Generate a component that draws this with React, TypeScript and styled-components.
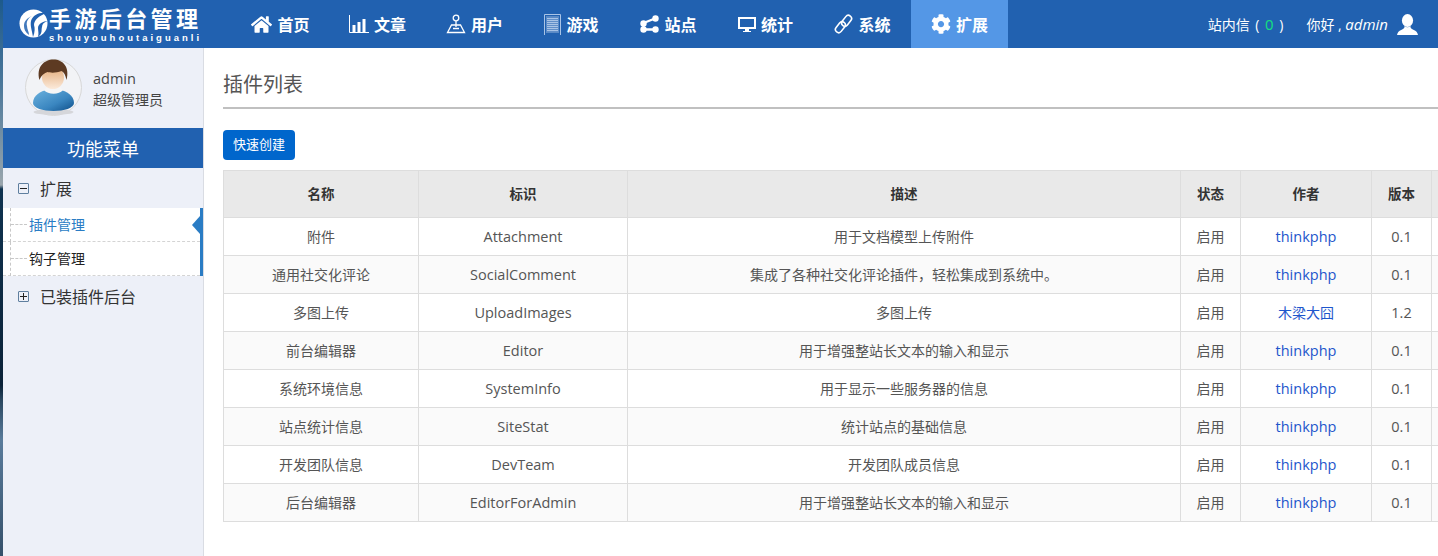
import React from "react";
import styled, { createGlobalStyle } from "styled-components";
import { FaHome, FaCog } from "react-icons/fa";

const Global = createGlobalStyle`
  html, body { margin: 0; padding: 0; background: #fff; overflow: hidden; }
  body { font-family: "Open Sans", "Noto Sans CJK SC", sans-serif; color: #555; }
  * { box-sizing: border-box; }
`;

const Page = styled.div`
  width: 1438px; height: 556px; overflow: hidden; display: flex; flex-direction: column;
  padding-left: 3px;
  background: linear-gradient(180deg, #1d5a8c 0, #4f7a9c 90px, #9aa6ad 185px, #0f3350 189px, #0b2238 385px, #2a4760 400px, #5a7c9c 440px, #35506a 556px);
`;
const Top = styled.header`
  height: 48px; background: #2161b0; display: flex; align-items: stretch; color: #fff; flex: none;
`;
const Logo = styled.div`
  width: 229px; padding: 9px 0 0 16px; display: flex; gap: 1px; flex: none;
`;
const LogoText = styled.div`display: flex; flex-direction: column; margin-top: -5px;`;
const LogoCn = styled.span`
  font: 700 22px/26px "Noto Sans CJK SC", sans-serif; letter-spacing: 3.4px; white-space: nowrap;
`;
const LogoEn = styled.span`
  font: 700 9.5px/10px "Liberation Sans", sans-serif; letter-spacing: 3px; margin-top: 3px; white-space: nowrap;
`;
const Nav = styled.nav`display: flex; align-items: stretch; flex: none;`;
const NavItem = styled.div<{ $active?: boolean }>`
  width: 97px; display: flex; align-items: center; justify-content: center; gap: 5px;
  font: 700 16px "Noto Sans CJK SC", sans-serif; background: ${(p) => (p.$active ? "#5497e6" : "transparent")};
`;
const Right = styled.div`
  margin-left: auto; display: flex; align-items: center; font: 14px "Open Sans", "Noto Sans CJK SC", sans-serif; padding-right: 20px;
`;
const Msg = styled.span`margin-right: 23px; white-space: pre; word-spacing: 2px;`;
const Green = styled.span`color: #13e07f; font-size: 15px;`;
const Greeting = styled.span`white-space: pre; margin-right: 9px;`;
const Em = styled.em`font-style: italic; font-size: 15px;`;

const Body = styled.div`flex: 1; display: flex; min-height: 0;`;
const Side = styled.aside`
  width: 201px; background: #edf0f8; border-right: 1px solid #d9dce3; flex: none; display: flex; flex-direction: column;
`;
const Profile = styled.div`height: 80px; display: flex; align-items: center; padding: 0 0 0 22px; gap: 10px; flex: none;`;
const ProfileText = styled.div`font-size: 14px; line-height: 21px; color: #444; font-family: "Noto Sans CJK SC", sans-serif; padding-top: 1px;`;
const ProfileName = styled.div`font-family: "Open Sans", sans-serif; font-size: 14.5px;`;
const MenuHead = styled.div`
  height: 40px; background: #2161b0; color: #fff; display: flex; align-items: center; justify-content: center;
  font: 18px "Noto Sans CJK SC", sans-serif; flex: none;
`;
const Group = styled.div`
  height: 40px; display: flex; align-items: center; padding-left: 15px; gap: 11px; color: #333; flex: none;
  font: 16px "Noto Sans CJK SC", sans-serif;
`;
const Toggle = styled.span<{ $plus?: boolean }>`
  width: 11px; height: 11px; border: 1px solid #5f7f9f; border-radius: 1px; position: relative; flex: none;
  &::before { content: ""; position: absolute; left: 1px; right: 1px; top: 4px; height: 1px; background: #222; }
  &::after { content: ""; display: ${(p) => (p.$plus ? "block" : "none")}; position: absolute; top: 1px; bottom: 1px; left: 4px; width: 1px; background: #222; }
`;
const Sub = styled.div`border-right: 3px solid #2a7cc4; background: #fff; flex: none;`;
const SubItem = styled.div<{ $active?: boolean }>`
  height: 34px; display: flex; align-items: center; position: relative; padding: 0 0 2px 26px;
  font: 14px "Noto Sans CJK SC", sans-serif;
  color: ${(p) => (p.$active ? "#2a7cc4" : "#222")};
  border-bottom: 1px dashed #d4d4d4;
  &::before { content: ""; position: absolute; left: 7px; top: 0; bottom: -1px; border-left: 1px dashed #c8c8c8; }
  &::after { content: ""; position: absolute; left: 8px; width: 16px; top: 16px; border-top: 1px dashed #c8c8c8; }
`;
const Arrow = styled.span`
  position: absolute; right: 0; top: 8px; border: 9px solid transparent; border-left: 0; border-right: 8px solid #2a7cc4;
`;

const Main = styled.main`flex: 1; min-width: 0; padding: 0 0 0 19px; background: #fff;`;
const Title = styled.h1`
  margin: 0; height: 61px; border-bottom: 2px solid #c0c0c0; font: 400 20px/71px "Noto Sans CJK SC", sans-serif; color: #555;
`;
const CreateBtn = styled.button`
  display: block; margin: 21px 0 10px; width: 72px; height: 30px; border: 0; border-radius: 4px; background: #0066cc; color: #fff;
  font: 13px/28px "Noto Sans CJK SC", sans-serif; padding: 0 0 2px;
`;
const Table = styled.table`
  border-collapse: collapse; table-layout: fixed; width: 1230px; color: #555;
  th, td { border: 1px solid #dddddd; text-align: center; padding: 0; }
  th { height: 47px; background: #e9e9e9; color: #333; font: 700 13.5px "Noto Sans CJK SC", sans-serif; padding-bottom: 2px; }
  td { height: 38px; font-size: 14.5px; }
  tbody tr:nth-child(even) td { background: #fafafa; }
`;
const CnCell = styled.td`&& { font: 14px "Noto Sans CJK SC", sans-serif; padding-bottom: 2px; }`;
const Author = styled.td<{ $cn: boolean }>`
  && {
    color: #1e56cc;
    ${(p) => (p.$cn ? `font: 14px "Noto Sans CJK SC", sans-serif; padding-bottom: 2px;` : "")}
  }
`;

const Doc = () => (
  <svg width="17" height="21" viewBox="0 0 17 21" aria-hidden="true">
    <path d="M0.5 21V0.5H16.5V21" fill="none" stroke="#a9c4e6" />
    <rect x="2" y="2" width="13" height="17" fill="#5a8ac6" />
    {[4, 6, 8, 10, 12, 14, 16].map((y) => <rect key={y} x="3" y={y} width="11" height="1.1" fill="#a9c4e6" />)}
  </svg>
);
const UserPin = () => (
  <svg width="20" height="20" viewBox="0 0 20 20" fill="none" stroke="#fff" strokeWidth="1.3" aria-hidden="true">
    <circle cx="10" cy="4" r="2.8" />
    <path d="M10 7v6M5.5 11h9L18.5 18.5H1.5ZM7 14.5h6" />
  </svg>
);
const Monitor = () => (
  <svg width="18" height="17" viewBox="0 0 18 17" aria-hidden="true">
    <path d="M1 2h16v10H1Z" fill="none" stroke="#fff" strokeWidth="2" />
    <path d="M7 13h4v2h2v1H5v-1h2Z" fill="#fff" />
  </svg>
);
const Bars = () => (
  <svg width="20" height="18" viewBox="0 0 20 18" aria-hidden="true">
    <path d="M0.5 0v17.5H20" fill="none" stroke="#fff" />
    <rect x="3.5" y="10" width="3" height="7" fill="#fff" /><rect x="8.5" y="7" width="3" height="10" fill="#fff" /><rect x="13.5" y="4" width="3" height="13" fill="#fff" />
  </svg>
);
const Share = () => (
  <svg width="19" height="18" viewBox="0 0 19 18" aria-hidden="true">
    <path d="M3.5 8L15 3.5M3.5 14.5H15M3.5 8V14.5" stroke="#fff" strokeWidth="2.4" fill="none" />
    <circle cx="15.5" cy="3.5" r="3.2" fill="#fff" />
    <circle cx="3.5" cy="8.5" r="3.2" fill="#fff" />
    <circle cx="3.5" cy="14.5" r="3.2" fill="#fff" />
    <circle cx="15.5" cy="14.5" r="3.2" fill="#fff" />
  </svg>
);
const Chain = () => (
  <svg width="19" height="20" viewBox="0 0 19 20" fill="none" stroke="#fff" strokeWidth="1.6" aria-hidden="true">
    <rect x="9.4" y="0.8" width="6.4" height="12" rx="3.2" transform="rotate(38 12.6 6.8)" />
    <rect x="3.2" y="7.2" width="6.4" height="12" rx="3.2" transform="rotate(38 6.4 13.2)" />
  </svg>
);
const Bust = () => (
  <svg width="21" height="21" viewBox="0 0 21 21" fill="#fff" aria-hidden="true">
    <ellipse cx="10.5" cy="6.5" rx="5.6" ry="6.5" />
    <path d="M7.5 12c.4 2.2-1.4 3-3.3 3.9C2 17 .5 18 0 21h21c-.5-3-2-4-4.2-5.1-1.9-.9-3.7-1.7-3.3-3.9-1.8 1.6-4.2 1.6-6 0Z" />
  </svg>
);
const LogoMark = () => (
  <svg width="29" height="29" viewBox="0 0 29 29" aria-hidden="true" style={{ flex: "none" }}>
    <circle cx="14.5" cy="14.5" r="14" fill="#fff" />
    <path d="M27 4c-7-1-13 2-15 8-1 5 1 9 2 16 2-5 2-9 1-12 0-5 5-9 12-12Z" fill="#2161b0" />
    <path d="M29 12c-5 0-10 3-10 7 0 3 1 5 0 9 5-4 3-7 4-10 0-3 2-5 6-6Z" fill="#2161b0" />
    <path d="M13 7C9 9 7 13 8 17c0 3 2 6 2 9-4-3-5-6-5-9 0-5 3-8 8-10Z" fill="#2161b0" opacity=".85" />
  </svg>
);
const Avatar = () => (
  <svg width="58" height="58" viewBox="0 0 58 58" aria-hidden="true" style={{ flex: "none" }}>
    <defs>
      <linearGradient id="face" x1="0" x2="0" y1="0" y2="1"><stop offset="0" stopColor="#e2a873" /><stop offset="1" stopColor="#fbeadb" /></linearGradient>
      <linearGradient id="shirt" x1="0" x2="1" y1="0" y2="1"><stop offset="0" stopColor="#6cb2de" /><stop offset=".6" stopColor="#3a86c0" /><stop offset="1" stopColor="#0f4f8a" /></linearGradient>
    </defs>
    <circle cx="28.5" cy="28.5" r="28" fill="#f2f3f6" stroke="#d8d8d8" />
    <ellipse cx="28.5" cy="53" rx="20" ry="3" fill="#d5d6da" />
    <path d="M8 44c0-8 8-12 14-13h13c6 1 14 5 14 13 0 5-10 8-20.5 8S8 49 8 44Z" fill="url(#shirt)" />
    <path d="M19 31c4 5 15 5 19 0l-3-3H22Z" fill="#f6f6f6" />
    <ellipse cx="28" cy="18.5" rx="11" ry="11.5" fill="url(#face)" />
    <path d="M14.5 21C11 8 19 .5 28.5 .5 38 .5 45 8 41.5 21c-1-5-2.5-8-5-9-5 2-11 2-14 1-3 1-6 3-8 8Z" fill="#5d3a22" />
  </svg>
);

const rows = [
  ["附件", "Attachment", "用于文档模型上传附件", "thinkphp", "0.1"],
  ["通用社交化评论", "SocialComment", "集成了各种社交化评论插件，轻松集成到系统中。", "thinkphp", "0.1"],
  ["多图上传", "UploadImages", "多图上传", "木梁大囧", "1.2"],
  ["前台编辑器", "Editor", "用于增强整站长文本的输入和显示", "thinkphp", "0.1"],
  ["系统环境信息", "SystemInfo", "用于显示一些服务器的信息", "thinkphp", "0.1"],
  ["站点统计信息", "SiteStat", "统计站点的基础信息", "thinkphp", "0.1"],
  ["开发团队信息", "DevTeam", "开发团队成员信息", "thinkphp", "0.1"],
  ["后台编辑器", "EditorForAdmin", "用于增强整站长文本的输入和显示", "thinkphp", "0.1"],
];
const widths = [195, 209, 553, 60, 131, 60, 60];

export default function App() {
  return (
    <Page>
      <Global />
      <Top>
        <Logo>
          <LogoMark />
          <LogoText>
            <LogoCn>手游后台管理</LogoCn>
            <LogoEn>shouyouhoutaiguanli</LogoEn>
          </LogoText>
        </Logo>
        <Nav>
          <NavItem><FaHome size={21} />首页</NavItem>
          <NavItem><Bars />文章</NavItem>
          <NavItem><UserPin />用户</NavItem>
          <NavItem><Doc />游戏</NavItem>
          <NavItem><Share />站点</NavItem>
          <NavItem><Monitor />统计</NavItem>
          <NavItem><Chain />系统</NavItem>
          <NavItem $active><FaCog size={20} />扩展</NavItem>
        </Nav>
        <Right>
          <Msg>站内信 ( <Green>0</Green> )</Msg>
          <Greeting>你好 , <Em>admin</Em></Greeting>
          <Bust />
        </Right>
      </Top>
      <Body>
        <Side>
          <Profile>
            <Avatar />
            <ProfileText>
              <ProfileName>admin</ProfileName>
              超级管理员
            </ProfileText>
          </Profile>
          <MenuHead>功能菜单</MenuHead>
          <Group><Toggle />扩展</Group>
          <Sub>
            <SubItem $active>插件管理<Arrow /></SubItem>
            <SubItem>钩子管理</SubItem>
          </Sub>
          <Group><Toggle $plus />已装插件后台</Group>
        </Side>
        <Main>
          <Title>插件列表</Title>
          <CreateBtn>快速创建</CreateBtn>
          <Table>
            <colgroup>{widths.map((w, i) => <col key={i} style={{ width: w }} />)}</colgroup>
            <thead>
              <tr><th>名称</th><th>标识</th><th>描述</th><th>状态</th><th>作者</th><th>版本</th><th></th></tr>
            </thead>
            <tbody>
              {rows.map((r) => (
                <tr key={r[1]}>
                  <CnCell>{r[0]}</CnCell>
                  <td>{r[1]}</td>
                  <CnCell>{r[2]}</CnCell>
                  <CnCell>启用</CnCell>
                  <Author $cn={r[3] !== "thinkphp"}>{r[3]}</Author>
                  <td>{r[4]}</td>
                  <td></td>
                </tr>
              ))}
            </tbody>
          </Table>
        </Main>
      </Body>
    </Page>
  );
}
